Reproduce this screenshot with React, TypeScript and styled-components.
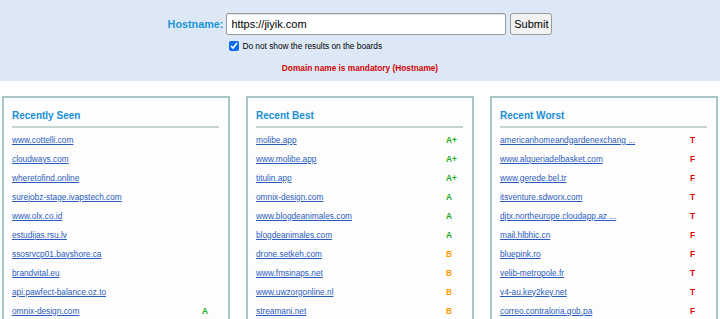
import React from "react";
import styled, { createGlobalStyle } from "styled-components";

const GlobalStyle = createGlobalStyle`
  html, body {
    margin: 0;
    padding: 0;
    background: #ffffff;
    font-family: "Liberation Sans", Arial, sans-serif;
  }
`;

// Header band with the hostname form
const Band = styled.div`
  box-sizing: border-box;
  height: 81px;
  padding-top: 13px;
  background: #dde8f6;
  display: flex;
  flex-direction: column;
  align-items: center;
`;

const Form = styled.form`
  display: grid;
  grid-template-columns: auto auto;
  column-gap: 3px;
  row-gap: 6px;
  align-items: center;
`;

const Label = styled.label`
  font-size: 10.8px;
  font-weight: bold;
  color: #1a96d8;
  text-align: right;
`;

const Field = styled.div`
  display: flex;
  align-items: center;
  gap: 4px;
`;

const Input = styled.input`
  box-sizing: border-box;
  width: 280px;
  height: 22px;
  padding: 0 4px;
  font-family: "Liberation Sans", Arial, sans-serif;
  font-size: 11px;
  color: #000;
  background: #fff;
  border: 1px solid #9a9a9a;
  border-radius: 2px;
  box-shadow: inset 0 1px 1px rgba(0, 0, 0, 0.12);
  outline: none;
`;

const Button = styled.button`
  box-sizing: border-box;
  width: 42px;
  height: 22px;
  padding: 0;
  font-family: "Liberation Sans", Arial, sans-serif;
  font-size: 11px;
  color: #000;
  background: #f2f2f2;
  border: 1px solid #9a9a9a;
  border-radius: 3px;
`;

const CheckRow = styled.label`
  grid-column: 2;
  display: flex;
  align-items: center;
  gap: 3px;
  height: 10px;
  padding-left: 3px;
  font-size: 8.3px;
  color: #000;
`;

const Check = styled.input`
  width: 10px;
  height: 10px;
  margin: 0;
  accent-color: #0b6cf0;
`;

const Error = styled.div`
  margin-top: 12px;
  font-size: 8.3px;
  line-height: 10px;
  font-weight: bold;
  color: #d40000;
`;

// Boards
const Boards = styled.div`
  margin-top: 15px;
  padding: 0 2px;
  display: grid;
  grid-template-columns: repeat(3, 1fr);
  column-gap: 16px;
`;

const Panel = styled.section`
  border: 2px solid #a9c6c6;
  background: #fdfdfd;
  padding: 11px 9px 20px 8px;
`;

const Title = styled.h3`
  margin: 0;
  font-size: 10px;
  line-height: 14px;
  font-weight: bold;
  color: #1a8fd8;
`;

const Divider = styled.div`
  height: 2px;
  margin: 3px 0 2px;
  background: #c6d3d3;
`;

const Row = styled.div`
  display: grid;
  grid-template-columns: 1fr 17px;
  align-items: center;
  height: 19px;
`;

const Link = styled.a`
  font-size: 8.3px;
  color: #2a5cc0;
  text-decoration: underline;
  white-space: nowrap;
`;

const gradeColors: Record<string, string> = {
  "A+": "#22aa22",
  A: "#22aa22",
  B: "#ff9a00",
  T: "#dd0000",
  F: "#dd0000",
};

const Grade = styled.span<{ $grade: string }>`
  font-size: 8.3px;
  font-weight: bold;
  color: ${(p) => gradeColors[p.$grade] || "#000"};
`;

type Entry = [string, string];

const boards: { title: string; rows: Entry[] }[] = [
  {
    title: "Recently Seen",
    rows: [
      ["www.cottelli.com", ""],
      ["cloudways.com", ""],
      ["wheretofind.online", ""],
      ["surejobz-stage.ivapstech.com", ""],
      ["www.olx.co.id", ""],
      ["estudijas.rsu.lv", ""],
      ["ssosrvcp01.bayshore.ca", ""],
      ["brandvital.eu", ""],
      ["api.pawfect-balance.oz.to", ""],
      ["omnix-design.com", "A"],
    ],
  },
  {
    title: "Recent Best",
    rows: [
      ["molibe.app", "A+"],
      ["www.molibe.app", "A+"],
      ["titulin.app", "A+"],
      ["omnix-design.com", "A"],
      ["www.blogdeanimales.com", "A"],
      ["blogdeanimales.com", "A"],
      ["drone.setkeh.com", "B"],
      ["www.fmsinaps.net", "B"],
      ["www.uwzorgonline.nl", "B"],
      ["streamani.net", "B"],
    ],
  },
  {
    title: "Recent Worst",
    rows: [
      ["americanhomeandgardenexchang ...", "T"],
      ["www.alqueriadelbasket.com", "F"],
      ["www.gerede.bel.tr", "F"],
      ["itsventure.sdworx.com", "T"],
      ["djtx.northeurope.cloudapp.az ...", "T"],
      ["mail.hlbhic.cn", "F"],
      ["bluepink.ro", "F"],
      ["velib-metropole.fr", "T"],
      ["v4-au.key2key.net", "T"],
      ["correo.contraloria.gob.pa", "F"],
    ],
  },
];

export default function App() {
  return (
    <>
      <GlobalStyle />
      <Band>
        <Form onSubmit={(e) => e.preventDefault()}>
          <Label htmlFor="host">Hostname:</Label>
          <Field>
            <Input id="host" defaultValue="https://jiyik.com" />
            <Button type="submit">Submit</Button>
          </Field>
          <CheckRow>
            <Check type="checkbox" defaultChecked />
            Do not show the results on the boards
          </CheckRow>
        </Form>
        <Error>Domain name is mandatory (Hostname)</Error>
      </Band>
      <Boards>
        {boards.map((b) => (
          <Panel key={b.title}>
            <Title>{b.title}</Title>
            <Divider />
            {b.rows.map(([host, grade], i) => (
              <Row key={i}>
                <Link href="#">{host}</Link>
                <Grade $grade={grade}>{grade}</Grade>
              </Row>
            ))}
          </Panel>
        ))}
      </Boards>
    </>
  );
}
